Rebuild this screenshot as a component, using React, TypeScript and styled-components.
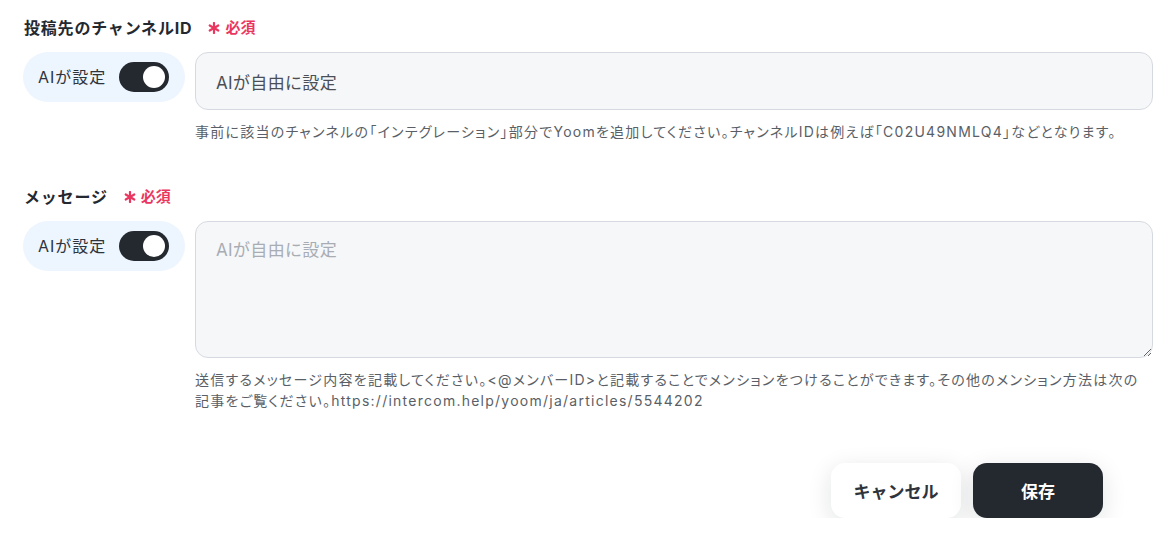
import React from "react";
import styled, { createGlobalStyle } from "styled-components";

const GlobalStyle = createGlobalStyle`
  html, body {
    margin: 0;
    padding: 0;
    background: #ffffff;
  }
  body {
    font-family: Inter, "Noto Sans CJK JP", sans-serif;
    color: #24282f;
  }
  * { box-sizing: border-box; }
`;

const FONT = `Inter, "Noto Sans CJK JP", sans-serif`;

const Page = styled.div`
  width: 1176px;
  padding: 18px 23px 0 23px;
  display: flex;
  flex-direction: column;
`;

const Field = styled.section<{ $gapTop?: number }>`
  display: flex;
  flex-direction: column;
  margin-top: ${(p) => p.$gapTop ?? 0}px;
`;

const LabelRow = styled.div`
  display: flex;
  align-items: center;
  gap: 16px;
  height: 20px;
  padding-left: 1px;
  margin-bottom: 14px;
`;

const Label = styled.span`
  font-size: 16px;
  font-weight: 700;
  line-height: 20px;
  letter-spacing: 0.05em;
  color: #24282f;
`;

const Required = styled.span`
  display: inline-flex;
  align-items: center;
  gap: 5px;
  font-size: 15px;
  font-weight: 700;
  color: #ea3760;
  line-height: 20px;
`;

const Row = styled.div`
  display: flex;
  align-items: flex-start;
  gap: 10px;
`;

const AiPill = styled.div`
  flex: 0 0 162px;
  height: 50px;
  border-radius: 25px;
  background: #edf5fe;
  display: flex;
  align-items: center;
  padding-left: 15px;
  gap: 13px;
`;

const AiText = styled.span`
  font-size: 16px;
  letter-spacing: 0.06em;
  color: #2f343b;
  line-height: 20px;
  white-space: nowrap;
`;

const Toggle = styled.span<{ $on: boolean }>`
  position: relative;
  width: 50px;
  height: 30px;
  border-radius: 15px;
  background: ${(p) => (p.$on ? "#24282f" : "#c9ced6")};
  flex: 0 0 auto;
  &::after {
    content: "";
    position: absolute;
    top: 4px;
    left: ${(p) => (p.$on ? "24px" : "4px")};
    width: 22px;
    height: 22px;
    border-radius: 50%;
    background: #ffffff;
  }
`;

const InputCol = styled.div`
  flex: 1;
  display: flex;
  flex-direction: column;
`;

const TextInput = styled.input`
  width: 100%;
  height: 58px;
  border: 1px solid #d6dae0;
  border-radius: 13px;
  background: #f6f7f9;
  padding: 0 20px;
  font-family: ${FONT};
  font-size: 17px;
  letter-spacing: 0.02em;
  color: #4a4f57;
  outline: none;
  &::placeholder { color: #a8adb4; }
`;

const TextArea = styled.textarea`
  display: block;
  width: 100%;
  height: 137px;
  border: 1px solid #d6dae0;
  border-radius: 13px;
  background: #f6f7f9;
  padding: 17px 20px;
  font-family: ${FONT};
  font-size: 17px;
  letter-spacing: 0.02em;
  line-height: 22px;
  color: #4a4f57;
  outline: none;
  resize: vertical;
  &::placeholder { color: #a8adb4; }
`;

const Help = styled.p<{ $top: number }>`
  margin: ${(p) => p.$top}px 0 0 0;
  font-size: 14px;
  line-height: 21px;
  letter-spacing: 1.25px;
  font-feature-settings: "palt";
  color: #5a5f67;
`;

const Footer = styled.div`
  display: flex;
  justify-content: flex-end;
  gap: 12px;
  margin-top: 52px;
  padding-right: 50px;
`;

const Button = styled.button<{ $primary?: boolean }>`
  width: 130px;
  height: 55px;
  border: none;
  border-radius: 14px;
  font-family: ${FONT};
  font-size: 17px;
  font-weight: 700;
  cursor: pointer;
  background: ${(p) => (p.$primary ? "#24282f" : "#ffffff")};
  color: ${(p) => (p.$primary ? "#ffffff" : "#2f343b")};
  box-shadow: 0 6px 24px rgba(20, 24, 32, 0.12);
`;

/* Six-spoke asterisk used as the required-field mark */
const AsteriskIcon = () => (
  <svg width="12" height="12" viewBox="0 0 12 12" aria-hidden>
    <g stroke="#ea3760" strokeWidth="2.2" strokeLinecap="round">
      <line x1="6" y1="1" x2="6" y2="11" />
      <line x1="1.7" y1="3.5" x2="10.3" y2="8.5" />
      <line x1="1.7" y1="8.5" x2="10.3" y2="3.5" />
    </g>
  </svg>
);

const RequiredMark = () => (
  <Required>
    <AsteriskIcon />
    必須
  </Required>
);

export default function App() {
  return (
    <>
      <GlobalStyle />
      <Page>
        <Field>
          <LabelRow>
            <Label>投稿先のチャンネルID</Label>
            <RequiredMark />
          </LabelRow>
          <Row>
            <AiPill>
              <AiText>AIが設定</AiText>
              <Toggle $on />
            </AiPill>
            <InputCol>
              <TextInput defaultValue="AIが自由に設定" readOnly />
              <Help $top={11}>
                事前に該当のチャンネルの「インテグレーション」部分でYoomを追加してください。チャンネルIDは例えば「C02U49NMLQ4」などとなります。
              </Help>
            </InputCol>
          </Row>
        </Field>

        <Field $gapTop={45}>
          <LabelRow>
            <Label>メッセージ</Label>
            <RequiredMark />
          </LabelRow>
          <Row>
            <AiPill>
              <AiText>AIが設定</AiText>
              <Toggle $on />
            </AiPill>
            <InputCol>
              <TextArea placeholder="AIが自由に設定" />
              <Help $top={11}>
                送信するメッセージ内容を記載してください。&lt;@メンバーID&gt;と記載することでメンションをつけることができます。その他のメンション方法は次の記事をご覧ください。https://intercom.help/yoom/ja/articles/5544202
              </Help>
            </InputCol>
          </Row>
        </Field>

        <Footer>
          <Button>キャンセル</Button>
          <Button $primary>保存</Button>
        </Footer>
      </Page>
    </>
  );
}
